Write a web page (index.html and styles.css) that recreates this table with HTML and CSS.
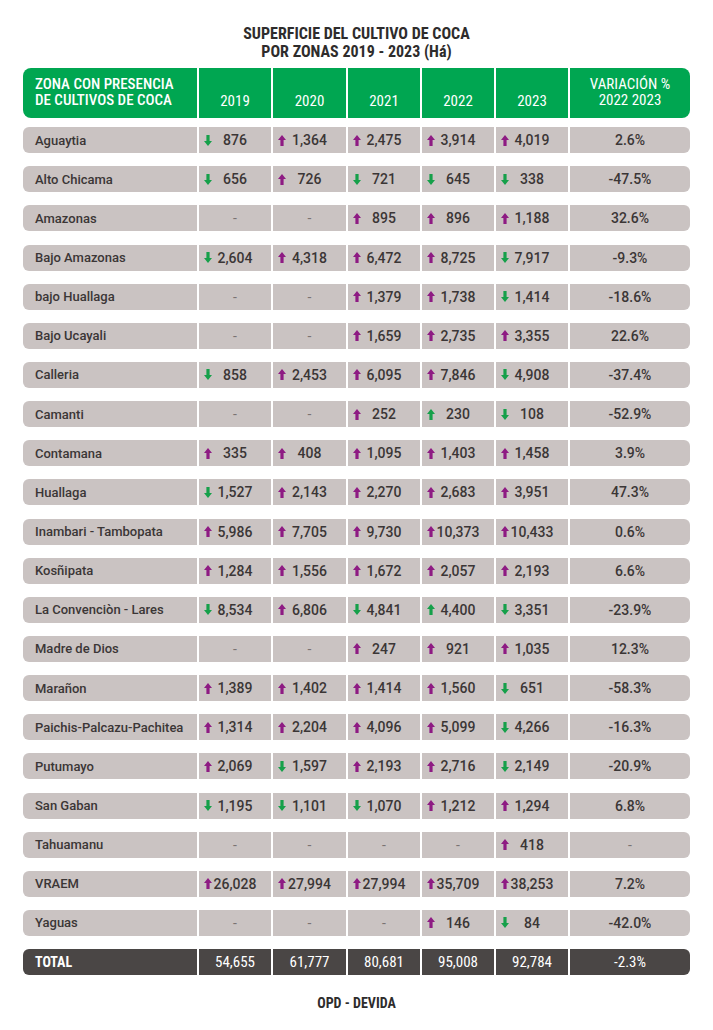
FILE: index.html
```html
<!DOCTYPE html>
<html lang="es">
<head>
<meta charset="utf-8">
<title>Superficie del cultivo de coca</title>
<link rel="stylesheet" href="styles.css">
</head>
<body>
<svg class="defs" width="0" height="0" aria-hidden="true">
  <symbol id="up" viewBox="0 0 8 11"><path d="M4 0 L8 5 H5.6 V11 H2.4 V5 H0 Z"/></symbol>
  <symbol id="dn" viewBox="0 0 8 11"><path d="M4 11 L8 6 H5.6 V0 H2.4 V6 H0 Z"/></symbol>
</svg>
<main class="page">
  <h1 class="title">SUPERFICIE DEL CULTIVO DE COCA<br>POR ZONAS 2019 - 2023 (Há)</h1>
  <div class="table">
    <div class="row head">
      <div class="h name">ZONA CON PRESENCIA<br>DE CULTIVOS DE COCA</div>
      <div class="h">2019</div>
      <div class="h">2020</div>
      <div class="h">2021</div>
      <div class="h">2022</div>
      <div class="h">2023</div>
      <div class="h var">VARIACIÓN %<br>2022 2023</div>
    </div>

    <div class="row"><div class="name">Aguaytia</div>
      <div class="c"><svg class="ar g"><use href="#dn"/></svg><span>876</span></div>
      <div class="c"><svg class="ar p"><use href="#up"/></svg><span>1,364</span></div>
      <div class="c"><svg class="ar p"><use href="#up"/></svg><span>2,475</span></div>
      <div class="c"><svg class="ar p"><use href="#up"/></svg><span>3,914</span></div>
      <div class="c"><svg class="ar p"><use href="#up"/></svg><span>4,019</span></div>
      <div class="v">2.6%</div></div>

    <div class="row"><div class="name">Alto Chicama</div>
      <div class="c"><svg class="ar g"><use href="#dn"/></svg><span>656</span></div>
      <div class="c"><svg class="ar p"><use href="#up"/></svg><span>726</span></div>
      <div class="c"><svg class="ar g"><use href="#dn"/></svg><span>721</span></div>
      <div class="c"><svg class="ar g"><use href="#dn"/></svg><span>645</span></div>
      <div class="c"><svg class="ar g"><use href="#dn"/></svg><span>338</span></div>
      <div class="v">-47.5%</div></div>

    <div class="row"><div class="name">Amazonas</div>
      <div class="c e">-</div>
      <div class="c e">-</div>
      <div class="c"><svg class="ar p"><use href="#up"/></svg><span>895</span></div>
      <div class="c"><svg class="ar p"><use href="#up"/></svg><span>896</span></div>
      <div class="c"><svg class="ar p"><use href="#up"/></svg><span>1,188</span></div>
      <div class="v">32.6%</div></div>

    <div class="row"><div class="name">Bajo Amazonas</div>
      <div class="c"><svg class="ar g"><use href="#dn"/></svg><span>2,604</span></div>
      <div class="c"><svg class="ar p"><use href="#up"/></svg><span>4,318</span></div>
      <div class="c"><svg class="ar p"><use href="#up"/></svg><span>6,472</span></div>
      <div class="c"><svg class="ar p"><use href="#up"/></svg><span>8,725</span></div>
      <div class="c"><svg class="ar g"><use href="#dn"/></svg><span>7,917</span></div>
      <div class="v">-9.3%</div></div>

    <div class="row"><div class="name">bajo Huallaga</div>
      <div class="c e">-</div>
      <div class="c e">-</div>
      <div class="c"><svg class="ar p"><use href="#up"/></svg><span>1,379</span></div>
      <div class="c"><svg class="ar p"><use href="#up"/></svg><span>1,738</span></div>
      <div class="c"><svg class="ar g"><use href="#dn"/></svg><span>1,414</span></div>
      <div class="v">-18.6%</div></div>

    <div class="row"><div class="name">Bajo Ucayali</div>
      <div class="c e">-</div>
      <div class="c e">-</div>
      <div class="c"><svg class="ar p"><use href="#up"/></svg><span>1,659</span></div>
      <div class="c"><svg class="ar p"><use href="#up"/></svg><span>2,735</span></div>
      <div class="c"><svg class="ar p"><use href="#up"/></svg><span>3,355</span></div>
      <div class="v">22.6%</div></div>

    <div class="row"><div class="name">Calleria</div>
      <div class="c"><svg class="ar g"><use href="#dn"/></svg><span>858</span></div>
      <div class="c"><svg class="ar p"><use href="#up"/></svg><span>2,453</span></div>
      <div class="c"><svg class="ar p"><use href="#up"/></svg><span>6,095</span></div>
      <div class="c"><svg class="ar p"><use href="#up"/></svg><span>7,846</span></div>
      <div class="c"><svg class="ar g"><use href="#dn"/></svg><span>4,908</span></div>
      <div class="v">-37.4%</div></div>

    <div class="row"><div class="name">Camanti</div>
      <div class="c e">-</div>
      <div class="c e">-</div>
      <div class="c"><svg class="ar p"><use href="#up"/></svg><span>252</span></div>
      <div class="c"><svg class="ar g"><use href="#up"/></svg><span>230</span></div>
      <div class="c"><svg class="ar g"><use href="#dn"/></svg><span>108</span></div>
      <div class="v">-52.9%</div></div>

    <div class="row"><div class="name">Contamana</div>
      <div class="c"><svg class="ar p"><use href="#up"/></svg><span>335</span></div>
      <div class="c"><svg class="ar p"><use href="#up"/></svg><span>408</span></div>
      <div class="c"><svg class="ar p"><use href="#up"/></svg><span>1,095</span></div>
      <div class="c"><svg class="ar p"><use href="#up"/></svg><span>1,403</span></div>
      <div class="c"><svg class="ar p"><use href="#up"/></svg><span>1,458</span></div>
      <div class="v">3.9%</div></div>

    <div class="row"><div class="name">Huallaga</div>
      <div class="c"><svg class="ar g"><use href="#dn"/></svg><span>1,527</span></div>
      <div class="c"><svg class="ar p"><use href="#up"/></svg><span>2,143</span></div>
      <div class="c"><svg class="ar p"><use href="#up"/></svg><span>2,270</span></div>
      <div class="c"><svg class="ar p"><use href="#up"/></svg><span>2,683</span></div>
      <div class="c"><svg class="ar p"><use href="#up"/></svg><span>3,951</span></div>
      <div class="v">47.3%</div></div>

    <div class="row"><div class="name">Inambari - Tambopata</div>
      <div class="c"><svg class="ar p"><use href="#up"/></svg><span>5,986</span></div>
      <div class="c"><svg class="ar p"><use href="#up"/></svg><span>7,705</span></div>
      <div class="c"><svg class="ar p"><use href="#up"/></svg><span>9,730</span></div>
      <div class="c"><svg class="ar p"><use href="#up"/></svg><span>10,373</span></div>
      <div class="c"><svg class="ar p"><use href="#up"/></svg><span>10,433</span></div>
      <div class="v">0.6%</div></div>

    <div class="row"><div class="name">Kosñipata</div>
      <div class="c"><svg class="ar p"><use href="#up"/></svg><span>1,284</span></div>
      <div class="c"><svg class="ar p"><use href="#up"/></svg><span>1,556</span></div>
      <div class="c"><svg class="ar p"><use href="#up"/></svg><span>1,672</span></div>
      <div class="c"><svg class="ar p"><use href="#up"/></svg><span>2,057</span></div>
      <div class="c"><svg class="ar p"><use href="#up"/></svg><span>2,193</span></div>
      <div class="v">6.6%</div></div>

    <div class="row"><div class="name">La Convenciòn - Lares</div>
      <div class="c"><svg class="ar g"><use href="#dn"/></svg><span>8,534</span></div>
      <div class="c"><svg class="ar p"><use href="#up"/></svg><span>6,806</span></div>
      <div class="c"><svg class="ar g"><use href="#dn"/></svg><span>4,841</span></div>
      <div class="c"><svg class="ar g"><use href="#up"/></svg><span>4,400</span></div>
      <div class="c"><svg class="ar g"><use href="#dn"/></svg><span>3,351</span></div>
      <div class="v">-23.9%</div></div>

    <div class="row"><div class="name">Madre de Dios</div>
      <div class="c e">-</div>
      <div class="c e">-</div>
      <div class="c"><svg class="ar p"><use href="#up"/></svg><span>247</span></div>
      <div class="c"><svg class="ar p"><use href="#up"/></svg><span>921</span></div>
      <div class="c"><svg class="ar p"><use href="#up"/></svg><span>1,035</span></div>
      <div class="v">12.3%</div></div>

    <div class="row"><div class="name">Marañon</div>
      <div class="c"><svg class="ar p"><use href="#up"/></svg><span>1,389</span></div>
      <div class="c"><svg class="ar p"><use href="#up"/></svg><span>1,402</span></div>
      <div class="c"><svg class="ar p"><use href="#up"/></svg><span>1,414</span></div>
      <div class="c"><svg class="ar p"><use href="#up"/></svg><span>1,560</span></div>
      <div class="c"><svg class="ar g"><use href="#dn"/></svg><span>651</span></div>
      <div class="v">-58.3%</div></div>

    <div class="row"><div class="name">Paichis-Palcazu-Pachitea</div>
      <div class="c"><svg class="ar p"><use href="#up"/></svg><span>1,314</span></div>
      <div class="c"><svg class="ar p"><use href="#up"/></svg><span>2,204</span></div>
      <div class="c"><svg class="ar p"><use href="#up"/></svg><span>4,096</span></div>
      <div class="c"><svg class="ar p"><use href="#up"/></svg><span>5,099</span></div>
      <div class="c"><svg class="ar g"><use href="#dn"/></svg><span>4,266</span></div>
      <div class="v">-16.3%</div></div>

    <div class="row"><div class="name">Putumayo</div>
      <div class="c"><svg class="ar p"><use href="#up"/></svg><span>2,069</span></div>
      <div class="c"><svg class="ar g"><use href="#dn"/></svg><span>1,597</span></div>
      <div class="c"><svg class="ar p"><use href="#up"/></svg><span>2,193</span></div>
      <div class="c"><svg class="ar p"><use href="#up"/></svg><span>2,716</span></div>
      <div class="c"><svg class="ar g"><use href="#dn"/></svg><span>2,149</span></div>
      <div class="v">-20.9%</div></div>

    <div class="row"><div class="name">San Gaban</div>
      <div class="c"><svg class="ar g"><use href="#dn"/></svg><span>1,195</span></div>
      <div class="c"><svg class="ar g"><use href="#dn"/></svg><span>1,101</span></div>
      <div class="c"><svg class="ar g"><use href="#dn"/></svg><span>1,070</span></div>
      <div class="c"><svg class="ar p"><use href="#up"/></svg><span>1,212</span></div>
      <div class="c"><svg class="ar p"><use href="#up"/></svg><span>1,294</span></div>
      <div class="v">6.8%</div></div>

    <div class="row"><div class="name">Tahuamanu</div>
      <div class="c e">-</div>
      <div class="c e">-</div>
      <div class="c e">-</div>
      <div class="c e">-</div>
      <div class="c"><svg class="ar p"><use href="#up"/></svg><span>418</span></div>
      <div class="v e">-</div></div>

    <div class="row"><div class="name">VRAEM</div>
      <div class="c"><svg class="ar p"><use href="#up"/></svg><span>26,028</span></div>
      <div class="c"><svg class="ar p"><use href="#up"/></svg><span>27,994</span></div>
      <div class="c"><svg class="ar p"><use href="#up"/></svg><span>27,994</span></div>
      <div class="c"><svg class="ar p"><use href="#up"/></svg><span>35,709</span></div>
      <div class="c"><svg class="ar p"><use href="#up"/></svg><span>38,253</span></div>
      <div class="v">7.2%</div></div>

    <div class="row"><div class="name">Yaguas</div>
      <div class="c e">-</div>
      <div class="c e">-</div>
      <div class="c e">-</div>
      <div class="c"><svg class="ar p"><use href="#up"/></svg><span>146</span></div>
      <div class="c"><svg class="ar g"><use href="#dn"/></svg><span>84</span></div>
      <div class="v">-42.0%</div></div>

    <div class="row total"><div class="name">TOTAL</div>
      <div class="t">54,655</div>
      <div class="t">61,777</div>
      <div class="t">80,681</div>
      <div class="t">95,008</div>
      <div class="t">92,784</div>
      <div class="t">-2.3%</div></div>
  </div>
  <p class="source">OPD - DEVIDA</p>
</main>
</body>
</html>
```

FILE: styles.css
```css
* { box-sizing: border-box; }
html, body { margin: 0; padding: 0; background: #ffffff; }
.defs { position: absolute; width: 0; height: 0; overflow: hidden; }
.page {
  width: 667px;
  margin: 0 auto;
  padding-top: 25px;
  font-family: Roboto, "Liberation Sans", sans-serif;
  color: #3b3636;
}
.title {
  margin: 0 0 7px;
  text-align: center;
  font-family: "Liberation Sans Narrow", "Roboto Condensed", "DejaVu Sans Condensed", "Liberation Sans", sans-serif;
  font-stretch: condensed;
  font-weight: 700;
  font-size: 16px;
  line-height: 18px;
  color: #2e2c2c;
}
.table { display: flex; flex-direction: column; gap: 13.15px; }
.row {
  display: grid;
  grid-template-columns: 174px 72px 73px 72px 72px 72px 120px;
  column-gap: 2px;
  height: 26px;
}
.row > div { background: #cac3c2; display: flex; align-items: center; }
.row > div:first-child { border-radius: 6px 0 0 6px; }
.row > div:last-child { border-radius: 0 6px 6px 0; }
.head { height: 50px; margin-bottom: -4px; }
.head > div.h {
  background: #00a651;
  color: #ffffff;
  font-family: "Liberation Sans Narrow", "Roboto Condensed", "DejaVu Sans Condensed", "Liberation Sans", sans-serif;
  font-stretch: condensed;
  font-size: 15px;
  line-height: 16px;
  align-items: flex-end;
  justify-content: center;
  padding-bottom: 9px;
  text-align: center;
}
.head > div.h:first-child { border-radius: 8px 0 0 8px; justify-content: flex-start; text-align: left; padding-left: 12px; padding-bottom: 10px; }
.head > div.h:last-child { border-radius: 0 8px 8px 0; align-items: center; padding-bottom: 3px; }
.name { padding-left: 12px; font-weight: 500; font-size: 13px; }
.c { padding-left: 5px; font-size: 14px; font-weight: 500; }
.c .ar { width: 8px; height: 11px; flex: none; }
.c span { flex: 1; text-align: center; padding-right: 13px; white-space: nowrap; }
.ar.p { fill: #8e1b83; }
.ar.g { fill: #16a04a; }
.row > div.e { justify-content: center; padding-left: 0; color: #7a7373; font-weight: 400; }
.v { justify-content: center; font-size: 14px; font-weight: 500; }
.total > div { background: #4a4645; color: #ffffff; font-family: "Liberation Sans Narrow", "Roboto Condensed", "DejaVu Sans Condensed", "Liberation Sans", sans-serif; font-stretch: condensed; font-size: 15px; }
.total > div.name { font-weight: 700; font-size: 14px; }
.total > div.t { justify-content: center; }
.source {
  margin: 20px 0 0;
  text-align: center;
  font-family: "Liberation Sans Narrow", "Roboto Condensed", "DejaVu Sans Condensed", "Liberation Sans", sans-serif;
  font-stretch: condensed;
  font-weight: 700;
  font-size: 14px;
  color: #2e2c2c;
}
```
